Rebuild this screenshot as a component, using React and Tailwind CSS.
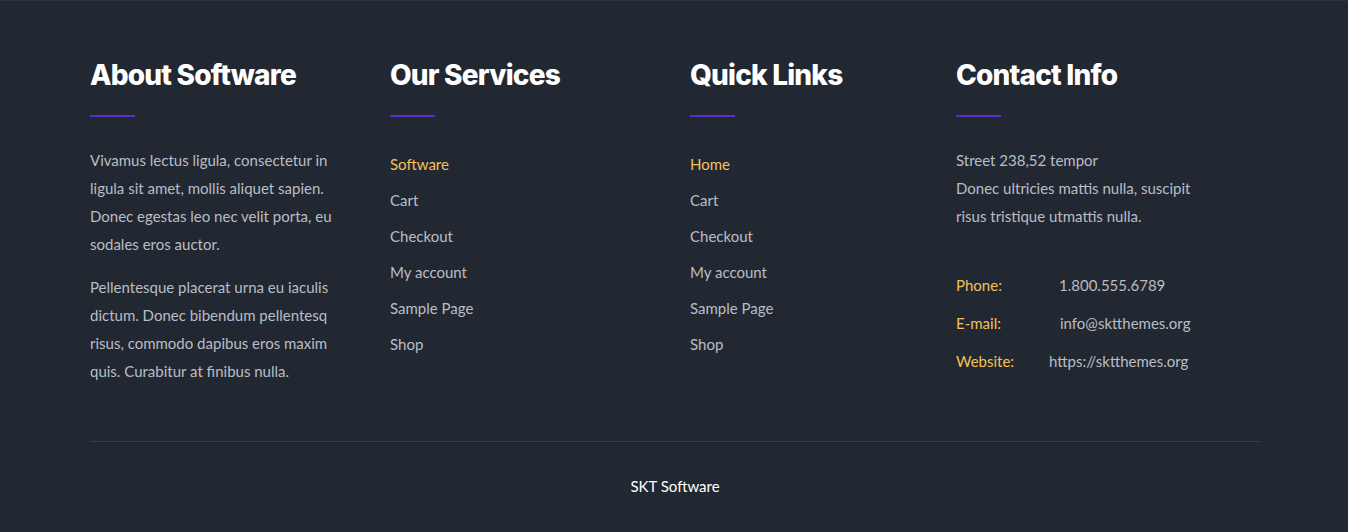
export default function App() {
  const services = ['Software', 'Cart', 'Checkout', 'My account', 'Sample Page', 'Shop'];
  const links = ['Home', 'Cart', 'Checkout', 'My account', 'Sample Page', 'Shop'];

  const Heading = ({ children }) => (
    <div>
      <h3 className="text-[28px] leading-[34px] font-extrabold text-white tracking-[-0.8px]" style={{ fontFamily: 'Inter, sans-serif' }}>
        {children}
      </h3>
      <div className="w-[45px] h-[2px] bg-[#5a2fc8] mt-[23px]" />
    </div>
  );

  return (
    <div className="min-h-[532px] bg-[#222832] border-t border-[#2c323c]" style={{ fontFamily: 'Lato, sans-serif' }}>
      <div className="ml-[90px] w-[1170px] pt-[57px]">
        <div className="grid grid-cols-[300px_300px_266px_1fr]">
          <div>
            <Heading>About Software</Heading>
            <div className="mt-[29px] pr-[50px] text-[15px] leading-[28px] text-[#b9bdc5]">
              <p>Vivamus lectus ligula, consectetur in ligula sit amet, mollis aliquet sapien. Donec egestas leo nec velit porta, eu sodales eros auctor.</p>
              <p className="mt-[15px]">Pellentesque placerat urna eu iaculis dictum. Donec bibendum pellentesq risus, commodo dapibus eros maxim quis. Curabitur at finibus nulla.</p>
            </div>
          </div>
          <div>
            <Heading>Our Services</Heading>
            <ul className="mt-[35px] flex flex-col gap-[12px] text-[15px] leading-[24px]">
              {services.map((s, i) => (
                <li key={s} className={i === 0 ? 'text-[#f2c157]' : 'text-[#b9bdc5]'}>{s}</li>
              ))}
            </ul>
          </div>
          <div>
            <Heading>Quick Links</Heading>
            <ul className="mt-[35px] flex flex-col gap-[12px] text-[15px] leading-[24px]">
              {links.map((s, i) => (
                <li key={s} className={i === 0 ? 'text-[#f2c157]' : 'text-[#b9bdc5]'}>{s}</li>
              ))}
            </ul>
          </div>
          <div>
            <Heading>Contact Info</Heading>
            <div className="mt-[29px] text-[15px] leading-[28px] text-[#b9bdc5] w-[245px]">
              <p>Street 238,52 tempor<br />Donec ultricies mattis nulla, suscipit risus tristique utmattis nulla.</p>
            </div>
            <div className="mt-[41px] flex flex-col gap-[10px] text-[15px] leading-[28px] text-[#b9bdc5]">
              <div className="flex">
                <span className="w-[103px] text-[#f2c157]">Phone:</span>
                <span>1.800.555.6789</span>
              </div>
              <div className="flex">
                <span className="w-[104px] text-[#f2c157]">E-mail:</span>
                <span>info@sktthemes.org</span>
              </div>
              <div className="flex">
                <span className="w-[93px] text-[#f2c157]">Website:</span>
                <span>https://sktthemes.org</span>
              </div>
            </div>
          </div>
        </div>
        <div className="mt-[56px] border-t border-[#373c46]" />
        <p className="pt-[33px] pb-[30px] text-center text-[15px] text-white">SKT Software</p>
      </div>
    </div>
  );
}
